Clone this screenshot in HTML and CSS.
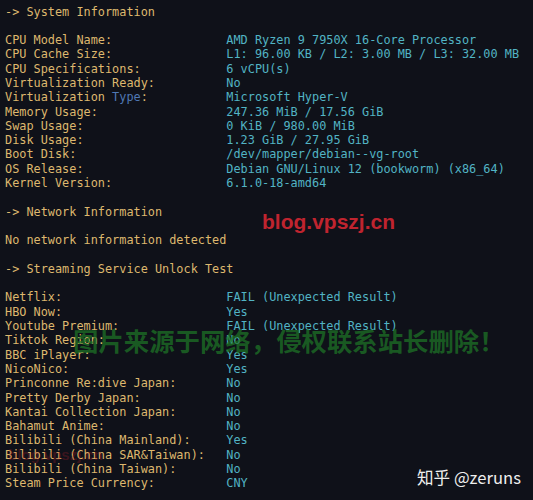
FILE: index.html
```html
<!DOCTYPE html>
<html>
<head>
<meta charset="utf-8">
<link rel="stylesheet" href="styles.css">
</head>
<body>
<div class="term">
  <div class="line lbl">-&gt; System Information</div>
  <div class="line"> </div>
  <div class="row"><span class="lbl">CPU Model Name:</span><span class="val">AMD Ryzen 9 7950X 16-Core Processor</span></div>
  <div class="row"><span class="lbl">CPU Cache Size:</span><span class="val">L1: 96.00 KB / L2: 3.00 MB / L3: 32.00 MB</span></div>
  <div class="row"><span class="lbl">CPU Specifications:</span><span class="val">6 vCPU(s)</span></div>
  <div class="row"><span class="lbl">Virtualization Ready:</span><span class="val">No</span></div>
  <div class="row"><span class="lbl">Virtualization <span class="kw">Type</span>:</span><span class="val">Microsoft Hyper-V</span></div>
  <div class="row"><span class="lbl">Memory Usage:</span><span class="val">247.36 MiB / 17.56 GiB</span></div>
  <div class="row"><span class="lbl">Swap Usage:</span><span class="val">0 KiB / 980.00 MiB</span></div>
  <div class="row"><span class="lbl">Disk Usage:</span><span class="val">1.23 GiB / 27.95 GiB</span></div>
  <div class="row"><span class="lbl">Boot Disk:</span><span class="val">/dev/mapper/debian--vg-root</span></div>
  <div class="row"><span class="lbl">OS Release:</span><span class="val">Debian GNU/Linux 12 (bookworm) (x86_64)</span></div>
  <div class="row"><span class="lbl">Kernel Version:</span><span class="val">6.1.0-18-amd64</span></div>
  <div class="line"> </div>
  <div class="line lbl">-&gt; Network Information</div>
  <div class="line"> </div>
  <div class="line lbl">No network information detected</div>
  <div class="line"> </div>
  <div class="line lbl">-&gt; Streaming Service Unlock Test</div>
  <div class="line"> </div>
  <div class="row"><span class="lbl">Netflix:</span><span class="val">FAIL (Unexpected Result)</span></div>
  <div class="row"><span class="lbl">HBO Now:</span><span class="val">Yes</span></div>
  <div class="row"><span class="lbl">Youtube Premium:</span><span class="val">FAIL (Unexpected Result)</span></div>
  <div class="row"><span class="lbl">Tiktok Region:</span><span class="val">No</span></div>
  <div class="row"><span class="lbl">BBC iPlayer:</span><span class="val">Yes</span></div>
  <div class="row"><span class="lbl">NicoNico:</span><span class="val">Yes</span></div>
  <div class="row"><span class="lbl">Princonne Re:dive Japan:</span><span class="val">No</span></div>
  <div class="row"><span class="lbl">Pretty Derby Japan:</span><span class="val">No</span></div>
  <div class="row"><span class="lbl">Kantai Collection Japan:</span><span class="val">No</span></div>
  <div class="row"><span class="lbl">Bahamut Anime:</span><span class="val">No</span></div>
  <div class="row"><span class="lbl">Bilibili (China Mainland):</span><span class="val">Yes</span></div>
  <div class="row"><span class="lbl">Bilibili (China SAR&amp;Taiwan):</span><span class="val">No</span></div>
  <div class="row"><span class="lbl">Bilibili (China Taiwan):</span><span class="val">No</span></div>
  <div class="row"><span class="lbl">Steam Price Currency:</span><span class="val">CNY</span></div>

  <div class="wm-red">blog.vpszj.cn</div>
  <div class="wm-faint">blog.vpszj.cn</div>
  <div class="wm-green">图片来源于网络，侵权联系站长删除！</div>
  <div class="wm-zhihu">知乎 @zeruns</div>
</div>
</body>
</html>
```

FILE: styles.css
```css
html, body {
  margin: 0;
  padding: 0;
  background: #0f1119;
}
.term {
  position: relative;
  width: 533px;
  height: 500px;
  overflow: hidden;
  box-sizing: border-box;
  padding: 4.5px 0 0 5px;
  background: #0f1119;
  font-family: "DejaVu Sans Mono", "Liberation Mono", monospace;
  font-size: 11.86px;
  line-height: 14.3px;
}
.line, .row {
  height: 14.3px;
  white-space: pre;
}
.row {
  display: grid;
  grid-template-columns: 31ch auto;
}
.lbl {
  color: #deb86e;
  white-space: pre;
}
.val {
  color: #52b4c4;
  white-space: pre;
}
.kw {
  color: #4f78b4;
}
.wm-red {
  position: absolute;
  left: 262px;
  top: 211px;
  font-family: "Liberation Sans", Arial, sans-serif;
  font-weight: 700;
  font-size: 21px;
  line-height: 21px;
  color: #c0242f;
}
.wm-faint {
  position: absolute;
  left: 8px;
  top: 447px;
  font-family: "Liberation Sans", Arial, sans-serif;
  font-weight: 700;
  font-size: 15px;
  line-height: 15px;
  color: rgba(170, 30, 40, 0.3);
}
.wm-green {
  position: absolute;
  left: 73px;
  top: 327px;
  font-family: "Noto Sans CJK SC", sans-serif;
  font-weight: 700;
  font-size: 25.4px;
  line-height: 26px;
  color: rgba(30, 118, 38, 0.72);
}
.wm-zhihu {
  position: absolute;
  left: 417px;
  top: 467px;
  font-family: "Noto Sans CJK SC", "Noto Sans", sans-serif;
  font-size: 16.6px;
  line-height: 20px;
  color: #eeeeee;
}
```
